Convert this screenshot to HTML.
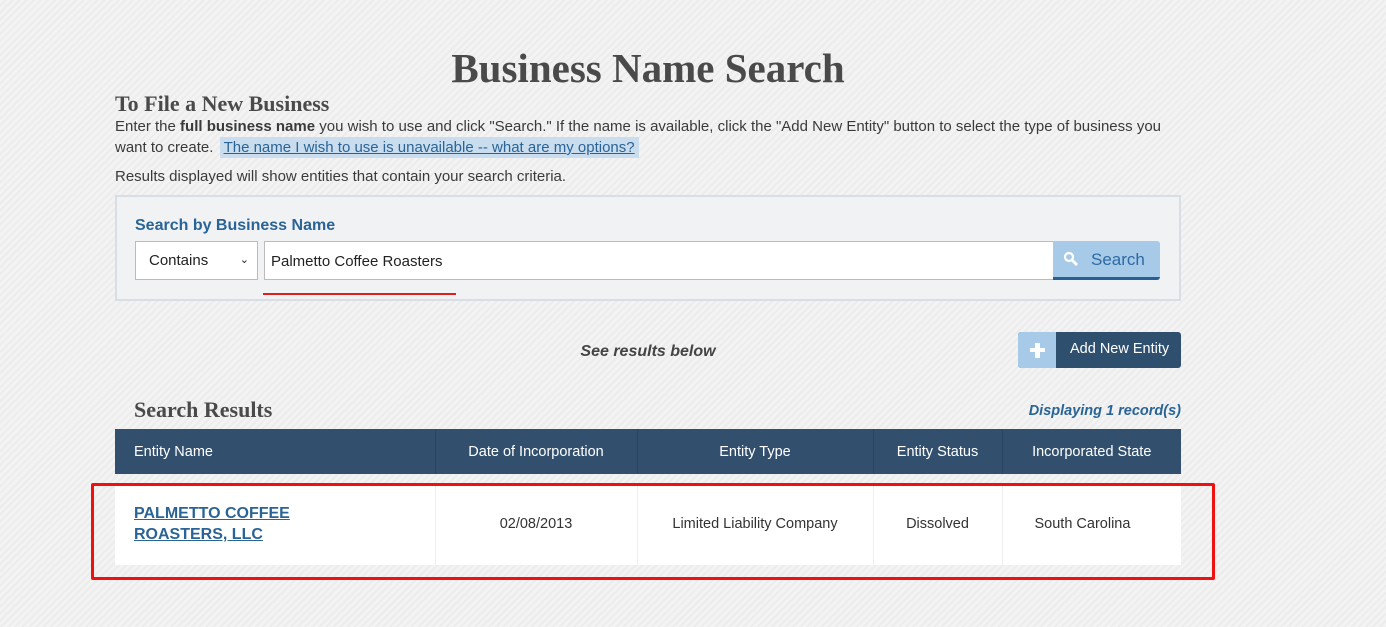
<!DOCTYPE html>
<html><head><meta charset="utf-8"><style>
body{margin:0;width:1386px;height:627px;overflow:hidden;background:#f1f1f1 repeating-linear-gradient(135deg,#f3f3f3 0 3px,#ececec 3px 5px);font-family:"Liberation Sans",sans-serif;color:#3a3a3a;position:relative}
.a{position:absolute}
.serif{font-family:"Liberation Serif",serif;font-weight:bold;color:#4a4a4a}
.t{font-size:15px;white-space:nowrap}
th,td{padding:0;font-weight:normal;box-sizing:border-box}
</style></head><body>
<div class="a serif" style="left:0;width:1296px;text-align:center;top:44px;font-size:41px">Business Name Search</div>
<div class="a serif" style="left:115px;top:91px;font-size:22px">To File a New Business</div>
<div class="a t" style="left:115px;top:118px">Enter the <b>full business name</b> you wish to use and click "Search." If the name is available, click the "Add New Entity" button to select the type of business you</div>
<div class="a t" style="left:115px;top:139px">want to create. <span style="background:#c9ddef;padding:2px 4px;color:#2a6496;text-decoration:underline;margin-left:2px">The name I wish to use is unavailable -- what are my options?</span></div>
<div class="a t" style="left:115px;top:168px">Results displayed will show entities that contain your search criteria.</div>
<div class="a" style="left:115px;top:195px;width:1062px;height:102px;background:#f0f2f4;border:2px solid #d9dee4"></div>
<div class="a" style="left:135px;top:217px;font-size:16px;font-weight:bold;color:#2a6496">Search by Business Name</div>
<div class="a" style="left:135px;top:241px;width:121px;height:37px;background:#fff;border:1px solid #bbb;font-size:15px;line-height:37px;color:#222"><span style="margin-left:13px">Contains</span><span style="position:absolute;right:8px;font-size:11px">&#8964;</span></div>
<div class="a" style="left:264px;top:241px;width:788px;height:37px;background:#fff;border:1px solid #bbb;font-size:15px;line-height:39px;color:#222"><span style="margin-left:6px">Palmetto Coffee Roasters</span></div>
<div class="a" style="left:1053px;top:241px;width:107px;height:36px;background:#a6cae8;border-bottom:3px solid #2a5f91;border-radius:0 3px 3px 0;color:#2e6aa3;font-size:17px;line-height:38px"><svg class="a" style="left:10px;top:10px" width="16" height="16" viewBox="0 0 16 16"><circle cx="6" cy="6" r="4" fill="none" stroke="#fff" stroke-width="2.2"/><path d="M9 9l5 5" stroke="#fff" stroke-width="2.8"/></svg><span style="margin-left:38px">Search</span></div>
<div class="a" style="left:263px;top:293px;width:193px;height:2px;background:#e02020"></div>
<div class="a" style="left:0;width:1296px;text-align:center;top:343px;font-size:16px;font-style:italic;font-weight:bold;color:#444">See results below</div>
<div class="a" style="left:1018px;top:332px;width:163px;height:36px;border-radius:3px;overflow:hidden;background:#2f4f6e;color:#fff;font-size:14.5px;line-height:35px"><div class="a" style="left:0;top:0;width:38px;height:36px;background:#a6cae8"><div class="a" style="left:12px;top:16px;width:15px;height:4px;background:#fff"></div><div class="a" style="left:17px;top:11px;width:5px;height:15px;background:#fff"></div></div><span style="margin-left:52px">Add New Entity</span></div>
<div class="a serif" style="left:134px;top:397px;font-size:22px">Search Results</div>
<div class="a" style="right:205px;top:403px;font-size:14.5px;font-style:italic;font-weight:bold;color:#2a6496">Displaying 1 record(s)</div>
<table class="a" style="left:115px;top:429px;width:1066px;border-collapse:collapse;font-size:14.5px;table-layout:fixed">
<colgroup><col style="width:320px"><col style="width:202px"><col style="width:236px"><col style="width:129px"><col style="width:179px"></colgroup>
<tr style="height:45px;background:#32506e;color:#fff"><th style="text-align:left;padding-left:19px;border-right:1px solid #2a4560">Entity Name</th><th style="border-right:1px solid #2a4560">Date of Incorporation</th><th style="border-right:1px solid #2a4560">Entity Type</th><th style="border-right:1px solid #2a4560">Entity Status</th><th>Incorporated State</th></tr>
<tr style="height:9px"><td colspan=5></td></tr>
<tr style="height:82px;background:#fff;color:#333;text-align:center"><td style="text-align:left;padding-left:19px;border-right:1px solid #eee"><a style="color:#2a6496;font-weight:bold;font-size:16px;line-height:21px;text-decoration:underline">PALMETTO COFFEE<br>ROASTERS, LLC</a></td><td style="border-right:1px solid #eee">02/08/2013</td><td style="border-right:1px solid #eee">Limited Liability Company</td><td style="border-right:1px solid #eee">Dissolved</td><td style="text-align:left;padding-left:32px">South Carolina</td></tr>
</table>
<div class="a" style="left:91px;top:483px;width:1118px;height:91px;border:3px solid #f01010;border-radius:2px"></div>
</body></html>
